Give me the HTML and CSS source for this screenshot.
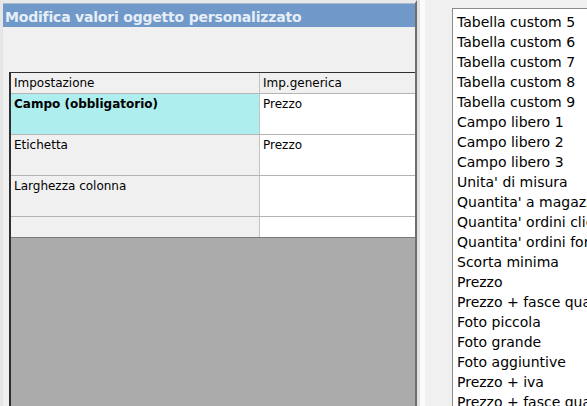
FILE: index.html
```html
<!DOCTYPE html>
<html lang="it">
<head>
<meta charset="utf-8">
<title>Modifica valori oggetto personalizzato</title>
<link rel="stylesheet" href="styles.css">
</head>
<body>
<div class="screen">
  <div class="win">
    <div class="title">Modifica valori oggetto personalizzato</div>
    <div class="content">
      <div class="grid">
        <div class="row head">
          <div class="c1">Impostazione</div>
          <div class="c2">Imp.generica</div>
        </div>
        <div class="row tall">
          <div class="c1 sel">Campo (obbligatorio)</div>
          <div class="c2">Prezzo</div>
        </div>
        <div class="row tall">
          <div class="c1">Etichetta</div>
          <div class="c2">Prezzo</div>
        </div>
        <div class="row tall">
          <div class="c1">Larghezza colonna</div>
          <div class="c2"></div>
        </div>
        <div class="row short">
          <div class="c1"></div>
          <div class="c2"></div>
        </div>
        <div class="workspace"></div>
      </div>
    </div>
  </div>
  <div class="side">
    <ul class="list">
      <li>Tabella custom 5</li>
      <li>Tabella custom 6</li>
      <li>Tabella custom 7</li>
      <li>Tabella custom 8</li>
      <li>Tabella custom 9</li>
      <li>Campo libero 1</li>
      <li>Campo libero 2</li>
      <li>Campo libero 3</li>
      <li>Unita' di misura</li>
      <li>Quantita' a magazzino</li>
      <li>Quantita' ordini clienti</li>
      <li>Quantita' ordini fornitori</li>
      <li>Scorta minima</li>
      <li>Prezzo</li>
      <li>Prezzo + fasce quantita'</li>
      <li>Foto piccola</li>
      <li>Foto grande</li>
      <li>Foto aggiuntive</li>
      <li>Prezzo + iva</li>
      <li>Prezzo + fasce quantita' + iva</li>
    </ul>
  </div>
</div>
</body>
</html>
```

FILE: styles.css
```css
html, body {
  margin: 0;
  height: 406px;
  overflow: hidden;
}
body {
  background: #f0f0f0;
  font-family: "DejaVu Sans", Verdana, sans-serif;
  color: #000;
}
.screen {
  display: flex;
  height: 406px;
}
.win {
  width: 412px;
  flex: none;
  display: flex;
  flex-direction: column;
  border-top: 3px solid #e9e9e9;
  border-left: 3px solid #e6e6e6;
  border-right: 2px solid #6e6e6e;
  box-shadow: 3px 0 0 #e2e2e2, 8px 0 0 #fbfbfb;
}
.title {
  height: 21px;
  line-height: 23px;
  padding-top: 2px;
  border-top: 1px solid #a9b9cc;
  background: #7098c9;
  color: #e6eef7;
  font-weight: bold;
  font-size: 14px;
  letter-spacing: -0.2px;
  padding-left: 2px;
  white-space: nowrap;
  overflow: hidden;
}
.content {
  flex: 1;
  background: #f0f0f0;
  padding: 45px 0 0 6px;
  display: flex;
  flex-direction: column;
  min-height: 0;
}
.grid {
  flex: 1;
  display: flex;
  flex-direction: column;
  border-top: 1px solid #2f2f2f;
  border-left: 2px solid #2f2f2f;
  font-size: 12px;
}
.row {
  display: flex;
  border-bottom: 1px solid #b4b4b4;
}
.row.head { height: 20px; }
.row.tall { height: 40px; }
.row.short { height: 20px; border-bottom-color: #7a7a7a; }
.c1, .c2 {
  padding: 3px 0 0 3px;
  line-height: 15px;
  white-space: nowrap;
  overflow: hidden;
}
.c1 {
  width: 245px;
  background: #f0f0f0;
  border-right: 1px solid #c4c4c4;
}
.c2 {
  flex: 1;
  background: #fff;
}
.head .c1, .head .c2 {
  background: #f0f0f0;
  line-height: 16px;
  padding-top: 2px;
}
.c1.sel {
  background: #afeeee;
  font-weight: bold;
}
.workspace {
  flex: 1;
  background: #ababab;
}
.side {
  flex: 1;
  padding: 8px 0 0 35px;
  overflow: hidden;
}
.list {
  list-style: none;
  margin: 0;
  padding: 3px 0 0 4px;
  background: #fff;
  border-top: 1px solid #8a8a8a;
  border-left: 1px solid #8a8a8a;
  height: 420px;
  font-size: 14px;
  line-height: 20px;
  white-space: nowrap;
  overflow: hidden;
}
```
